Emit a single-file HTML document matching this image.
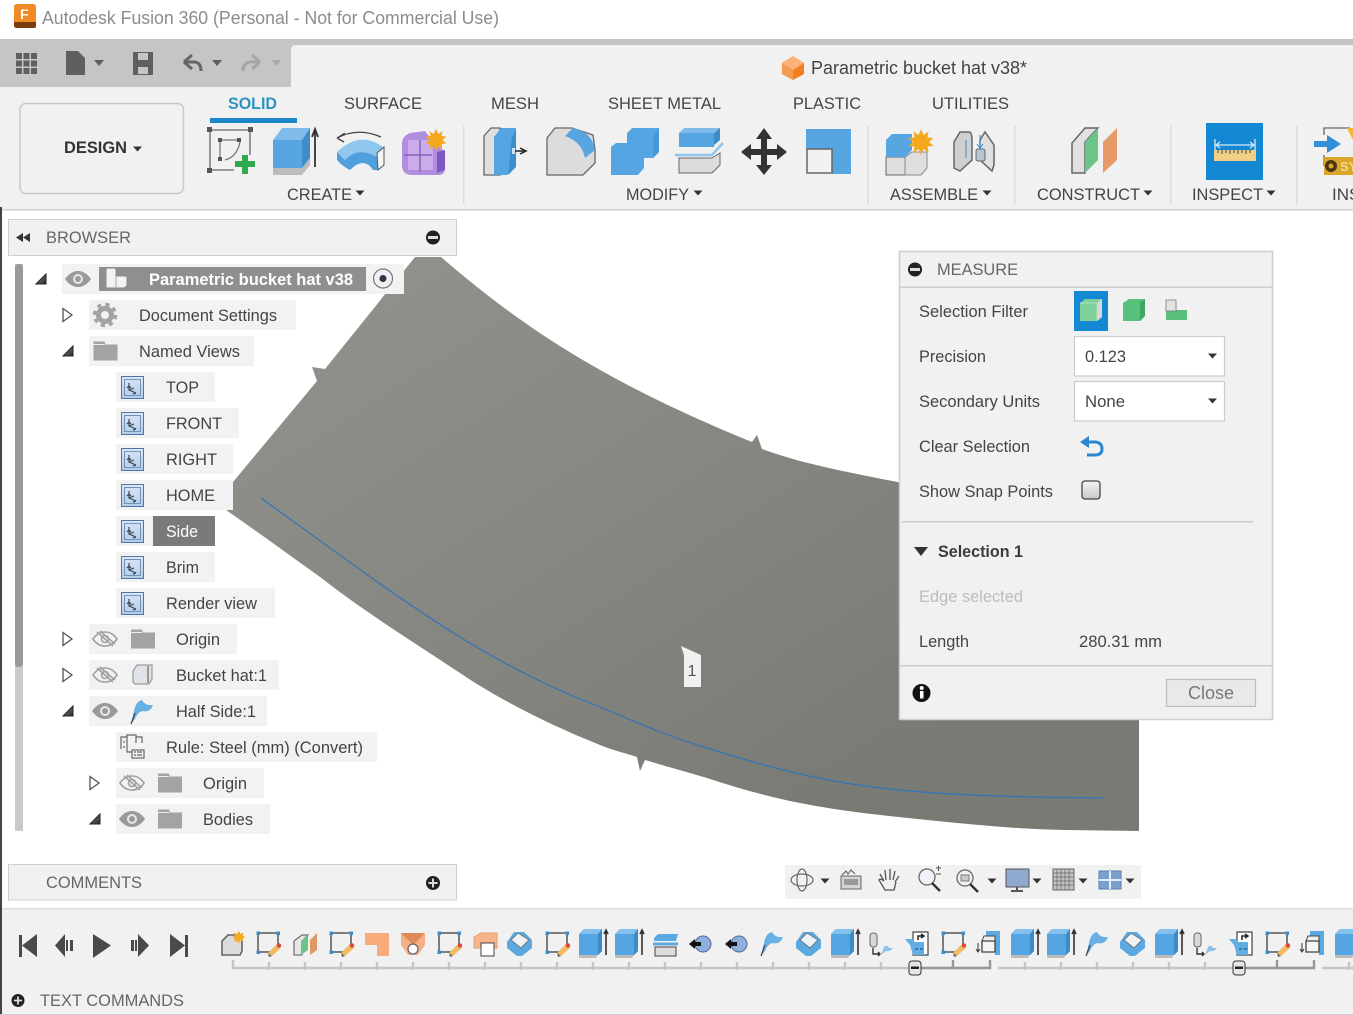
<!DOCTYPE html>
<html><head><meta charset="utf-8"><title>Autodesk Fusion 360</title>
<style>
html,body{margin:0;padding:0;background:#fff;width:1353px;height:1015px;overflow:hidden}
svg{display:block;position:absolute;left:0;top:0}
text{font-family:"Liberation Sans",Arial,sans-serif;font-size:17px;fill:#444}
.b{font-weight:bold}
</style></head><body>
<svg width="1353" height="1015" viewBox="0 0 1353 1015" xmlns="http://www.w3.org/2000/svg">
<defs>
<linearGradient id="hat" gradientUnits="userSpaceOnUse" x1="430" y1="257" x2="800" y2="830"><stop offset="0" stop-color="#90908b"/><stop offset=".5" stop-color="#868681"/><stop offset="1" stop-color="#7a7a75"/></linearGradient>
<linearGradient id="vw" x1="0" y1="0" x2="0" y2="1"><stop offset="0" stop-color="#dce7f4"/><stop offset="1" stop-color="#b4cbe6"/></linearGradient>
<linearGradient id="chk" x1="0" y1="0" x2="0" y2="1"><stop offset="0" stop-color="#f4f4f4"/><stop offset="1" stop-color="#c8c8c8"/></linearGradient>
<linearGradient id="tri" x1="0" y1="0" x2="1" y2="1"><stop offset="0" stop-color="#999"/><stop offset="1" stop-color="#222"/></linearGradient>
<g id="eye"><path d="M-13 0C-8-7-3-8 0-8S8-7 13 0C8 7 3 8 0 8S-8 7-13 0Z" fill="#9a9a9a"/><circle r="5" fill="#e8e8e8"/><circle r="3" fill="#9a9a9a"/></g>
<g id="noeye" fill="none" stroke="#a0a0a0" stroke-width="1.600"><path d="M-12 0C-8-6-3-7 0-7S8-6 12 0C8 6 3 7 0 7S-8 6-12 0Z"/><circle r="3.500"/><path d="M-8-7L8 7M-5-8L10 5"/></g>
<g id="folder"><path d="M0 0H11L12 3H24V19H0Z" fill="#a3a3a3"/><path d="M0 3H11" stroke="#eee" stroke-width="1"/></g>
<g id="view"><rect x=".5" y=".5" width="22" height="22" fill="url(#vw)" stroke="#4a78ad"/><rect x="3.500" y="3.500" width="16" height="16" fill="none" stroke="#6f93bd"/><path d="M8 7V14L15 17M8 10L6 12M8 10L10 12M15 17L12 18M8 14L13 12" fill="none" stroke="#35485f" stroke-width="1.200"/></g>
<path id="open" d="M-4-6.500L5 0L-4 6.500Z" fill="#fff" stroke="#555" stroke-width="1.300"/>
<path id="close" d="M5-5V5H-5Z" fill="url(#tri)" stroke="#222" stroke-width="1"/>
<path id="dn" d="M-4.500-2.500H4.500L0 2.500Z" fill="#333"/>
<g id="tsk"><path d="M-10-10H10V2M-10-10V9H3" fill="none" stroke="#555" stroke-width="1.500"/><path d="M-11.500-11.500h3.500v3.500h-3.500zM8.500-11.500h3.500v3.500h-3.500zM-11.500 7.500h3.500v3.500h-3.500z" fill="#3a8fc8"/><path d="M0 10L9 1L13 5L4 13Z" fill="#f0bb60"/><circle cx="11" cy="2.500" r="2.200" fill="#d9483b"/><path d="M0 10L4 13L1 14Z" fill="#666"/></g>
<g id="tex"><path d="M-14-9L-9-14H9V8L5 12H-14Z" fill="#55a5e2"/><path d="M-14-9L-9-14H9L5-9Z" fill="#84c0ec"/><path d="M5-9L9-14V8L5 12Z" fill="#3a8bc9"/><path d="M-14 12H5L3 15H-14Z" fill="#bdbdbd"/><path d="M13 12V-12M11-9L13-13L15-9" stroke="#333" fill="none" stroke-width="1.600"/></g>
<g id="tsh"><path d="M-13-1L-6-11H4L12-3V5L2 13H-3L-13 5Z" fill="#5ba9e0"/><path d="M-9-3L-2-10L9-3L1 5Z" fill="#eef2f5" stroke="#6a7a88"/></g>
<g id="tfl"><path d="M-11 13L-8 0Q-6-10 0-11Q3-5 11-6Q8 2 0 0Q-5 2-7 8Z" fill="#68b0e4"/><path d="M-11 13L-7 2" stroke="#445" stroke-width="1.200"/></g>
<g id="tjn"><circle cx="3" r="8" fill="#8fb0dc" stroke="#4c6c9c"/><path d="M-11 0L-5-5V-2H1V2H-5V5Z" fill="#111"/></g>
<g id="tml"><rect x="-11" y="-10" width="7" height="14" rx="3" fill="#d8d8d8" stroke="#666"/><path d="M-8 5V11H-1M-3 9L-1 11-3 13" fill="none" stroke="#333" stroke-width="1.400"/><path d="M0 12L3 4Q6 1 8 5L12 5Q9 9 5 8Z" fill="#8ec1ea"/></g>
<g id="tbx"><path d="M-4-11H11V12H-4Z" fill="#fff" stroke="#444" stroke-width="1.200"/><path d="M-12-4H-4V-1H7V12H-4L-7 2Z" fill="#62aee4"/><path d="M1-3V-7H6M4-9L7-7L4-5" stroke="#222" fill="none" stroke-width="1.500"/><path d="M-2 6H1M3 6H6" stroke="#1f6aa3" stroke-width="1.500"/></g>
<g id="trp"><path d="M-3-12H11V12H6V-7H-3Z" fill="#5ba9e0"/><path d="M-7-2L-5-7H6V-2Z" fill="#eee" stroke="#444"/><path d="M-7-2H6V9H-7Z" fill="#f5f5f5" stroke="#444" stroke-width="1.300"/><path d="M-11 0V8M-13 6L-11 9L-9 6" stroke="#333" fill="none"/></g>
</defs>

<!-- title -->
<rect width="1353" height="39" fill="#fff"/>
<path d="M14 7Q14 4 17 4H33Q36 4 36 7V28H17Q14 28 14 25Z" fill="#f08a24"/><path d="M14 22H36V25Q36 28 33 28H17Q14 28 14 25Z" fill="#7a3d12"/>
<text x="20" y="19" class="b" style="font-size:14px;fill:#fff">F</text>
<text x="42" y="24" style="fill:#8c8c8c;font-size:18px" textLength="457" lengthAdjust="spacingAndGlyphs">Autodesk Fusion 360 (Personal - Not for Commercial Use)</text>

<!-- toolbar -->
<rect y="39" width="1353" height="48" fill="#c5c5c5"/>
<path d="M291 87V50Q291 45 296 45H1353V87Z" fill="#f1f1f1"/>
<rect y="87" width="1353" height="122" fill="#f1f1f1"/>
<rect y="209" width="1353" height="1.500" fill="#cfcfcf"/>
<g fill="#5f5f5f"><path d="M16 53h6v6h-6zM23.500 53h6v6h-6zM31 53h6v6h-6zM16 60.500h6v6h-6zM23.500 60.500h6v6h-6zM31 60.500h6v6h-6zM16 68h6v6h-6zM23.500 68h6v6h-6zM31 68h6v6h-6z"/>
<path d="M66 51H78L85 58V75H66Z"/><path d="M94 60h10l-5 6z"/>
<path d="M133 52H153V75H133ZM138 53V60H148V53ZM138 67V74H148V67Z" fill-rule="evenodd"/>
<path d="M212 60h10l-5 6z"/></g>
<path d="M184 62L192 55M184 62L192 69M185 62H195Q201 63 201 71" fill="none" stroke="#666" stroke-width="3"/>
<path d="M260 62L252 55M260 62L252 69M259 62H250Q243 63 243 71" fill="none" stroke="#a5a5a5" stroke-width="3"/>
<path d="M272 60h9l-4.500 6z" fill="#aaa"/>

<path d="M782 63L793 56L804 63V74L793 80L782 74Z" fill="#f37e20"/><path d="M782 63L793 56L804 63L793 70Z" fill="#f9b27a"/><path d="M793 70V80L782 74V63Z" fill="#f59a52"/>
<text x="811" y="74" style="font-size:18px" textLength="216" lengthAdjust="spacingAndGlyphs">Parametric bucket hat v38*</text>

<text x="228" y="109" class="b" style="fill:#2f93c2" textLength="49" lengthAdjust="spacingAndGlyphs">SOLID</text>
<rect x="210" y="118" width="87" height="5" fill="#1d86c8"/>
<text x="344" y="109" textLength="78" lengthAdjust="spacingAndGlyphs">SURFACE</text>
<text x="491" y="109" textLength="48" lengthAdjust="spacingAndGlyphs">MESH</text>
<text x="608" y="109" textLength="113" lengthAdjust="spacingAndGlyphs">SHEET METAL</text>
<text x="793" y="109" textLength="68" lengthAdjust="spacingAndGlyphs">PLASTIC</text>
<text x="932" y="109" textLength="77" lengthAdjust="spacingAndGlyphs">UTILITIES</text>

<rect x="20" y="103.500" width="163.500" height="90" rx="6" fill="#f1f1f1" stroke="#c9c9c9" stroke-width="1.500"/>
<text x="64" y="153" class="b" style="fill:#333" textLength="63" lengthAdjust="spacingAndGlyphs">DESIGN</text>
<use href="#dn" x="137.500" y="149"/>

<!-- sketch -->
<path d="M210 130H250V155M210 130V170H234" fill="none" stroke="#666" stroke-width="1.300"/>
<path d="M207 127h5v5h-5zM248 127h5v5h-5zM207 168h5v5h-5zM218 138h4v4h-4zM237 138h4v4h-4zM218 157h4v4h-4z" fill="#555"/>
<path d="M220 142V157M222 140H237M225 160Q237 157 240 142" fill="none" stroke="#777" stroke-width="1.300"/>
<path d="M242 155h6v6h7v6h-7v7h-6v-7h-7v-6h7z" fill="#2fa84f"/>
<!-- extrude -->
<path d="M273 140H302V168H273Z" fill="#57a6e2"/><path d="M273 140L282 128H310L302 140Z" fill="#7fbcec"/><path d="M302 140L310 128V158L302 168Z" fill="#3e8dc9"/><path d="M273 168H302L310 158V165L302 175H273Z" fill="#bcbcbc"/>
<path d="M315 167V131M312 137L315 129L318 137" fill="none" stroke="#333" stroke-width="1.800"/>
<!-- revolve -->
<path d="M337 152Q360 130 383 147L377 157Q358 146 345 160Z" fill="#8fc7ef"/>
<path d="M337 152L345 160Q358 146 377 157L378 170H373Q364 156 350 170Q342 166 337 160Z" fill="#4f9fdc"/>
<path d="M337 138Q358 127 381 137M337 138L345 133M337 138L344 142" fill="none" stroke="#444" stroke-width="1.300"/>
<path d="M377 153L384 147V165L378 170Z" fill="#f4f4f4" stroke="#555"/>
<!-- form -->
<path d="M402 144Q402 136 410 133L425 131L432 140L445 152V168Q445 175 438 175H412Q402 175 402 165Z" fill="#b18de0"/>
<path d="M408 140H433V170H408Z" fill="#c9ace9"/><path d="M404 155H432M420 140V172" stroke="#7a55b8" stroke-width="1.200"/><path d="M437 152L445 150V170L437 173Z" fill="#7c59c4"/>
<path d="M436 129l2.500 5 4-3-1 5 5 .5-4 3.500 4 3.500-5 .5 1 5-4-3-2.500 5-2.500-5-4 3 1-5-5-.5 4-3.500-4-3.500 5-.5-1-5 4 3z" fill="#f4a81d"/>

<rect x="463" y="126" width="1.500" height="78" fill="#dcdcdc"/>
<rect x="867" y="126" width="1.500" height="78" fill="#dcdcdc"/>
<rect x="1014" y="126" width="1.500" height="78" fill="#dcdcdc"/>
<rect x="1170" y="126" width="1.500" height="78" fill="#dcdcdc"/>
<rect x="1296" y="126" width="1.500" height="78" fill="#dcdcdc"/>

<!-- press pull -->
<path d="M484 175V136L491 128H500V175Z" fill="#e0e0e0" stroke="#666" stroke-width="1.300"/>
<path d="M494 137L501 128H516L512 137ZM494 137H512V168L507 175H494Z" fill="#55a5e2"/><path d="M512 137L516 128V167L508 175Z" fill="#3e8dc9"/>
<path d="M513 151H524M520 148L526 151L520 154" stroke="#222" fill="none" stroke-width="1.500"/><rect x="512" y="148" width="3" height="6" fill="#cde3f5"/>
<!-- fillet -->
<path d="M547 175V138L555 128H572L593 135L595 150V163L583 175Z" fill="#dcdcdc" stroke="#666" stroke-width="1.300"/>
<path d="M565 136L573 128Q592 132 595 150L585 158Q582 142 565 136Z" fill="#57a6e2"/>
<!-- combine -->
<path d="M611 147L616 143H627V133L632 128H659V152L653 158H644V168L638 175H611Z" fill="#55a5e2"/>
<path d="M653 137L659 128V152L653 158Z" fill="#4a97d3"/>
<!-- split -->
<path d="M679 133L684 128H720L714 133Z" fill="#7fbcec"/><path d="M679 133H714V147H679Z" fill="#55a5e2"/><path d="M714 133L720 128V140L712 147H714Z" fill="#3e8dc9"/>
<path d="M675 155H712L723 143" stroke="#8ec5ee" stroke-width="2.500" fill="none"/>
<path d="M679 158H712L720 153V165L712 173H679Z" fill="#dcdcdc" stroke="#666"/>
<!-- move -->
<path d="M764 128L772 139H767V149H777V144L787 152L777 160V155H767V165H772L764 175L756 165H761V155H751V160L741 152L751 144V149H761V139H756Z" fill="#333"/>
<!-- align -->
<path d="M806 129H851V174H832V149H806Z" fill="#57a6e2"/><rect x="807" y="149" width="25" height="24" fill="#f1f1f1" stroke="#666" stroke-width="1.500"/>
<!-- new comp -->
<path d="M886 157H905V175H886Z" fill="#dedede" stroke="#666"/>
<path d="M905 157L912 152H927V168L921 175H905Z" fill="#dedede" stroke="#888"/>
<path d="M886 140L892 134H912V150L905 157H886Z" fill="#57a6e2"/>
<path d="M921 129l2.500 6 5-3.500-1 6 6 .5-4.500 4 4.500 4-6 .5 1 6-5-3.500-2.500 6-2.500-6-5 3.500 1-6-6-.5 4.500-4-4.500-4 6-.5-1-6 5 3.500z" fill="#f4a81d"/>
<!-- joint -->
<path d="M954 168V142L960 132H969Q972 132 972 140V160L960 171Z" fill="#cfcfcf" stroke="#666" stroke-width="1.500"/>
<path d="M994 145V165L992 171L980 160V140L985 132Z" fill="#e0e0e0" stroke="#666" stroke-width="1.500"/>
<rect x="976" y="149" width="9" height="12" rx="2" fill="#b8c4ce" stroke="#5d6a77"/><path d="M980 135V149M977 144L980 148L983 144M966 140V158" stroke="#3d8cc8" fill="none"/>
<!-- construct -->
<path d="M1072 173V143L1085 128H1098L1085 142V173Z" fill="#e0e0e0" stroke="#666" stroke-width="1.500"/>
<path d="M1085 142L1098 128V160L1085 173Z" fill="#6cc488"/>
<path d="M1103 142L1117 128V160L1103 173Z" fill="#e59a68"/>
<!-- inspect -->
<rect x="1206" y="123" width="57" height="57" fill="#1488d2"/>
<path d="M1214 150H1256V161H1214Z" fill="#f1cf84"/><path d="M1218 150v3M1222 150v4M1226 150v3M1230 150v4M1234 150v3M1238 150v4M1242 150v3M1246 150v4M1250 150v3" stroke="#444"/>
<path d="M1215 139V150M1255 139V150M1216 145H1254M1220 142L1216 145L1220 148M1250 142L1254 145L1250 148" stroke="#cfe8fb" fill="none" stroke-width="1.300"/>
<!-- insert -->
<path d="M1324 135V128H1350M1324 155V166" stroke="#666" fill="none" stroke-width="1.300"/><path d="M1347 128H1353V140Z" fill="#f4b62e"/>
<path d="M1314 141H1327V135L1341 144L1327 153V147H1314Z" fill="#2f8fd8"/>
<rect x="1324" y="157" width="29" height="18" fill="#d9a62e"/><circle cx="1331" cy="166" r="6" fill="#4a3412"/><circle cx="1331" cy="166" r="2.500" fill="#d9a62e"/>
<text x="1340" y="171" class="b" style="font-size:13px;fill:#f1d98b">SY</text>

<text x="287" y="200" textLength="65" lengthAdjust="spacingAndGlyphs">CREATE</text><use href="#dn" x="360" y="193"/>
<text x="626" y="200" textLength="63" lengthAdjust="spacingAndGlyphs">MODIFY</text><use href="#dn" x="698" y="193"/>
<text x="890" y="200" textLength="88" lengthAdjust="spacingAndGlyphs">ASSEMBLE</text><use href="#dn" x="987" y="193"/>
<text x="1037" y="200" textLength="103" lengthAdjust="spacingAndGlyphs">CONSTRUCT</text><use href="#dn" x="1148" y="193"/>
<text x="1192" y="200" textLength="71" lengthAdjust="spacingAndGlyphs">INSPECT</text><use href="#dn" x="1271" y="193"/>
<text x="1332" y="200">INSERT</text>

<!-- viewport model -->
<path fill="url(#hat)" d="M415 257H441C520 325 600 380 752 442L757 435L762 449C810 466 850 475 1139 525V831L1064 830C1020 829 990 826 957 823C900 817 850 813 800 803C770 797 740 789 707 778C690 773 665 766 645 760L640 771L637 757C625 753 612 750 600 745C550 725 500 700 460 673C410 640 365 612 320 577C285 552 255 530 226 510L233 482L317 381L312 367L325 369Z"/>
<path d="M261 498C340 555 400 600 460 637C505 665 555 690 600 707C635 722 670 737 707 748C745 760 780 770 814 777C850 785 885 789 921 792C960 795 995 796 1029 797L1103 798" fill="none" stroke="#2f74b8" stroke-width="1.200"/>
<path d="M681 646L701 655V687H684V655Z" fill="#f1f1f1"/><text x="687.500" y="676" style="font-size:16px;fill:#555">1</text>

<!-- left edge -->
<rect x="0" y="207" width="2" height="808" fill="#444"/>

<!-- browser -->
<rect x="8.500" y="219.500" width="448" height="36" fill="#f1f1f1" stroke="#cfcfcf"/>
<path d="M23 233V242L16 237.500ZM30 233V242L23 237.500Z" fill="#333"/>
<text x="46" y="243" style="fill:#666" textLength="85" lengthAdjust="spacingAndGlyphs">BROWSER</text>
<circle cx="433" cy="237.500" r="7" fill="#222"/><rect x="428" y="236" width="10" height="3" fill="#ddd"/>

<rect x="15" y="264" width="8" height="567" fill="#cacaca"/><rect x="15" y="264" width="8" height="403" rx="3" fill="#9a9a9a"/>

<g fill="#f2f2f2">
<rect x="62" y="264" width="342" height="30"/>
<rect x="89" y="300" width="207" height="30"/><rect x="89" y="336" width="165" height="30"/>
<rect x="116" y="372" width="99" height="30"/><rect x="116" y="408" width="123" height="30"/><rect x="116" y="444" width="117" height="30"/><rect x="116" y="480" width="117" height="30"/><rect x="116" y="516" width="99" height="30"/><rect x="116" y="552" width="99" height="30"/><rect x="116" y="588" width="159" height="30"/>
<rect x="89" y="624" width="148" height="30"/><rect x="89" y="660" width="190" height="30"/><rect x="89" y="696" width="178" height="30"/>
<rect x="116" y="732" width="261" height="30"/><rect x="116" y="768" width="148" height="30"/><rect x="116" y="804" width="154" height="30"/>
</g>
<rect x="99" y="267" width="267" height="24" fill="#8f8f8f"/>
<rect x="153" y="516" width="62" height="30" fill="#7a7a7a"/>

<use href="#close" x="41" y="279"/>
<use href="#eye" x="78" y="279"/>
<path d="M106 288V270Q106 268 108 268H114Q116 268 116 270V276H125Q127 276 127 278V286L124 288Z" fill="#f2f2f2" stroke="#888"/><path d="M116 276V288" stroke="#aaa"/>
<text x="149" y="285" class="b" style="fill:#fff" textLength="204" lengthAdjust="spacingAndGlyphs">Parametric bucket hat v38</text>
<circle cx="383" cy="278.500" r="9.500" fill="#eef0f4" stroke="#777" stroke-width="1.200"/><circle cx="383" cy="278.500" r="3.500" fill="#334"/>

<use href="#open" x="67" y="315"/>
<g transform="translate(105 315)"><circle r="6.500" fill="none" stroke="#a3a3a3" stroke-width="5"/><circle r="10.500" fill="none" stroke="#a3a3a3" stroke-width="3.500" stroke-dasharray="4.100 4.150"/></g>
<text x="139" y="321" textLength="138" lengthAdjust="spacingAndGlyphs">Document Settings</text>
<use href="#close" x="68" y="351"/>
<use href="#folder" x="93.500" y="341.500"/>
<text x="139" y="357" textLength="101" lengthAdjust="spacingAndGlyphs">Named Views</text>

<use href="#view" x="121" y="376"/><text x="166" y="393" textLength="33" lengthAdjust="spacingAndGlyphs">TOP</text>
<use href="#view" x="121" y="412"/><text x="166" y="429" textLength="56" lengthAdjust="spacingAndGlyphs">FRONT</text>
<use href="#view" x="121" y="448"/><text x="166" y="465" textLength="51" lengthAdjust="spacingAndGlyphs">RIGHT</text>
<use href="#view" x="121" y="484"/><text x="166" y="501" textLength="49" lengthAdjust="spacingAndGlyphs">HOME</text>
<use href="#view" x="121" y="520"/><text x="166" y="537" style="fill:#fff" textLength="32" lengthAdjust="spacingAndGlyphs">Side</text>
<use href="#view" x="121" y="556"/><text x="166" y="573" textLength="33" lengthAdjust="spacingAndGlyphs">Brim</text>
<use href="#view" x="121" y="592"/><text x="166" y="609" textLength="91" lengthAdjust="spacingAndGlyphs">Render view</text>

<use href="#open" x="67" y="639"/><use href="#noeye" x="105" y="639"/><use href="#folder" x="131" y="629.500"/>
<text x="176" y="645" textLength="44" lengthAdjust="spacingAndGlyphs">Origin</text>
<use href="#open" x="67" y="675"/><use href="#noeye" x="105" y="675"/>
<path d="M133 682V671L137 665H152V679L149 684H135Z" fill="#dfe2e6" stroke="#888"/><path d="M148 666V683" stroke="#999" stroke-width="2"/>
<text x="176" y="681" textLength="91" lengthAdjust="spacingAndGlyphs">Bucket hat:1</text>
<use href="#close" x="68" y="711"/><use href="#eye" x="105" y="711"/><use href="#tfl" x="142" y="711"/>
<text x="176" y="717" textLength="80" lengthAdjust="spacingAndGlyphs">Half Side:1</text>
<g fill="none" stroke="#666" stroke-width="1.200"><path d="M121 749V737H127V735H136V737H142V743M127 737V752H133M136 737V743M124 741v2M124 746v2"/><rect x="132" y="750" width="12" height="8" fill="#f4f4f4"/><path d="M134 752h2M137 752h5M134 755h2M137 755h5"/></g>
<text x="166" y="753" textLength="197" lengthAdjust="spacingAndGlyphs">Rule: Steel (mm) (Convert)</text>
<use href="#open" x="94" y="783"/><use href="#noeye" x="132" y="783"/><use href="#folder" x="158" y="773.500"/>
<text x="203" y="789" textLength="44" lengthAdjust="spacingAndGlyphs">Origin</text>
<use href="#close" x="95" y="819"/><use href="#eye" x="132" y="819"/><use href="#folder" x="158" y="809.500"/>
<text x="203" y="825" textLength="50" lengthAdjust="spacingAndGlyphs">Bodies</text>

<!-- comments -->
<rect x="8.500" y="864.500" width="448" height="35.500" fill="#f1f1f1" stroke="#cfcfcf"/>
<text x="46" y="888" style="fill:#666" textLength="96" lengthAdjust="spacingAndGlyphs">COMMENTS</text>
<circle cx="433" cy="883" r="7" fill="#222"/><path d="M428.500 883h9M433 878.500v9" stroke="#ddd" stroke-width="2"/>

<!-- nav bar -->
<rect x="785" y="865" width="356" height="34" fill="#f1f1f1"/>
<g fill="none" stroke="#666" stroke-width="1.200"><ellipse cx="802" cy="880" rx="11" ry="6"/><ellipse cx="802" cy="880" rx="5" ry="11"/></g>
<use href="#dn" x="825" y="881"/>
<rect x="841" y="876" width="20" height="13" fill="#d4d4d4" stroke="#666"/><rect x="844" y="879" width="14" height="6" fill="#999"/><path d="M842 875L846 871L848 874L851 870L855 874" fill="none" stroke="#555"/>
<path d="M884 881L880 874M886 880L885 870M890 880V869M893 880L895 871M895 882L899 876M884 881Q880 878 879 880L885 890H894L896 882" fill="none" stroke="#555" stroke-width="1.300"/>
<circle cx="927" cy="877" r="8" fill="#eef2f6" stroke="#666" stroke-width="1.300"/><path d="M932 883L940 891" stroke="#333" stroke-width="2.500"/><path d="M936 868h5M938.500 866v5M936 874h5" stroke="#555"/>
<circle cx="965" cy="878" r="8" fill="#eef2f6" stroke="#666" stroke-width="1.300"/><rect x="961" y="875" width="8" height="6" fill="#ccc" stroke="#777"/><path d="M970 884L978 892" stroke="#333" stroke-width="2.500"/>
<use href="#dn" x="992" y="881"/>
<rect x="1006" y="869" width="23" height="18" fill="#8fa9cf" stroke="#555"/><path d="M1017 887v3M1011 891h12" stroke="#555" stroke-width="2"/>
<use href="#dn" x="1037" y="881"/>
<rect x="1053" y="869" width="21" height="21" fill="#c4c4c4" stroke="#666"/><path d="M1053 873h21M1053 877h21M1053 881h21M1053 885h21M1057 869v21M1061 869v21M1065 869v21M1069 869v21" stroke="#666" stroke-width=".7"/>
<use href="#dn" x="1083" y="881"/>
<rect x="1099" y="871" width="22" height="18" fill="#7ba0d0" stroke="#5a7fb0"/><path d="M1110 871v18M1099 880h22" stroke="#e6eef8" stroke-width="2"/>
<use href="#dn" x="1130" y="881"/>

<!-- measure -->
<rect x="899.500" y="251.500" width="373" height="468" fill="#f1f1f1" stroke="#cdcdcd" stroke-width="1.500"/>
<rect x="900" y="286.500" width="372" height="1.500" fill="#cdcdcd"/>
<circle cx="915" cy="269.500" r="7" fill="#222"/><rect x="910" y="268" width="10" height="3" fill="#ddd"/>
<text x="937" y="275" style="fill:#666" textLength="81" lengthAdjust="spacingAndGlyphs">MEASURE</text>
<text x="919" y="317" textLength="109" lengthAdjust="spacingAndGlyphs">Selection Filter</text>
<text x="919" y="362" textLength="67" lengthAdjust="spacingAndGlyphs">Precision</text>
<text x="919" y="407" textLength="121" lengthAdjust="spacingAndGlyphs">Secondary Units</text>
<text x="919" y="452" textLength="111" lengthAdjust="spacingAndGlyphs">Clear Selection</text>
<text x="919" y="497" textLength="134" lengthAdjust="spacingAndGlyphs">Show Snap Points</text>
<rect x="1074" y="291" width="34" height="40" fill="#1488d2"/>
<path d="M1080 303L1085 299H1102L1101 318L1097 321H1080Z" fill="#7fd09b"/><path d="M1097 303L1102 299V317L1097 321Z" fill="#d8d8d8"/><path d="M1080 303H1097V321" fill="none" stroke="#a9dfbb"/>
<path d="M1123 303L1129 299H1145V316L1140 321H1123Z" fill="#58c07c"/><path d="M1140 303L1145 299V316L1140 321Z" fill="#41a563"/>
<path d="M1166 300H1176V310H1187V320H1166Z" fill="#58c07c"/><path d="M1166 300H1176V311H1166Z" fill="#e4e4e4" stroke="#777" stroke-width=".8"/>
<rect x="1074.500" y="336.500" width="150" height="39.500" fill="#fff" stroke="#ccc" stroke-width="1.200"/>
<text x="1085" y="362" textLength="41" lengthAdjust="spacingAndGlyphs">0.123</text><use href="#dn" x="1212.500" y="356"/>
<rect x="1074.500" y="381.500" width="150" height="39.500" fill="#fff" stroke="#ccc" stroke-width="1.200"/>
<text x="1085" y="407" textLength="40" lengthAdjust="spacingAndGlyphs">None</text><use href="#dn" x="1212.500" y="401"/>
<path d="M1087 442H1096Q1102 443 1102 449Q1102 455 1095 455H1087" fill="none" stroke="#2c87d0" stroke-width="3"/><path d="M1080 442L1089 436V448Z" fill="#2c87d0"/>
<rect x="1082" y="481" width="18" height="18" rx="3" fill="url(#chk)" stroke="#444" stroke-width="1.300"/>
<rect x="902" y="521" width="351" height="1.500" fill="#cbcbcb"/>
<path d="M914 547H928L921 556Z" fill="#333"/>
<text x="938" y="557" class="b" style="fill:#3c3c3c" textLength="85" lengthAdjust="spacingAndGlyphs">Selection 1</text>
<text x="919" y="602" style="fill:#bcbcbc" textLength="104" lengthAdjust="spacingAndGlyphs">Edge selected</text>
<text x="919" y="647" textLength="50" lengthAdjust="spacingAndGlyphs">Length</text>
<text x="1079" y="647" textLength="83" lengthAdjust="spacingAndGlyphs">280.31 mm</text>
<rect x="900" y="665" width="372" height="1.500" fill="#cdcdcd"/>
<circle cx="921.500" cy="693" r="9" fill="#111"/><rect x="920" y="691" width="3.500" height="7.500" fill="#fff"/><circle cx="921.700" cy="688" r="2" fill="#fff"/>
<rect x="1166.500" y="679.500" width="89" height="27" fill="#e9e9e9" stroke="#bdbdbd" stroke-width="1.200"/>
<text x="1188" y="699" style="fill:#777;font-size:18px" textLength="46" lengthAdjust="spacingAndGlyphs">Close</text>

<!-- bottom -->
<rect y="908" width="1353" height="107" fill="#f1f1f1"/>
<rect y="908" width="1353" height="1.500" fill="#dcdcdc"/>
<rect x="0" y="908" width="2" height="107" fill="#444"/>
<g fill="#4a4a4a">
<path d="M19 935h3v22h-3zM37 934V957L22 945.500Z"/>
<path d="M65 934V957L55 945.500ZM66 940h2v11h-2zM70 940h3v11h-3z"/>
<path d="M93 934L111 945.500L93 958Z"/>
<path d="M131 940h3v11h-3zM135 940h2v11h-2zM138 934L149 945.500L138 957Z"/>
<path d="M170 934L185 945.500L170 957ZM185 935h3v22h-3z"/>
</g>
<path d="M233 968H915M233 960v9M269 962v8M305 962v8M341 962v8M377 962v8M413 962v8M449 962v8M485 962v8M521 962v8M557 962v8M593 962v8M629 962v8M665 962v8M701 962v8M737 962v8M773 962v8M809 962v8M845 962v8M881 962v8M998 968H1240M1025 962v8M1061 962v8M1097 962v8M1133 962v8M1169 962v8M1205 962v8M1322 968H1353M1349 962v8" stroke="#c4c4c4" stroke-width="2.400" fill="none"/>
<path d="M915 968H990V960M953 960v8M1240 968H1314V960M1277 960v8" stroke="#979797" stroke-width="2.400" fill="none"/>
<g><rect x="909" y="961" width="12" height="14" rx="3" fill="#e6e6e6" stroke="#333"/><rect x="911" y="966.500" width="8" height="2.500" fill="#222"/><rect x="1233" y="961" width="12" height="14" rx="3" fill="#e6e6e6" stroke="#333"/><rect x="1235" y="966.500" width="8" height="2.500" fill="#222"/></g>

<!-- timeline icons -->
<path d="M222 955V941L228 935H240L242 938V951L240 955Z" fill="#dcdcdc" stroke="#666" stroke-width="1.600"/><path d="M239 931l1.500 3 3-1.500-1 3.500 3 1-3 1.500 1 3-3.500-1-1.500 3-1.500-3-3 1 1-3-3-1.500 3-1-1-3.500 3 1.500z" fill="#f4a81d"/>
<use href="#tsk" x="268" y="943"/>
<path d="M294 955V941L302 935H308L302 941V955Z" fill="#e6e6e6" stroke="#555"/><path d="M301 941L308 935V950L301 955Z" fill="#6cc488"/><path d="M310 940L317 933V950L310 955Z" fill="#dd9a66"/>
<use href="#tsk" x="341" y="943"/>
<path d="M365 933H389V956H377V945H365Z" fill="#f8ac7c"/>
<path d="M401 933H425V945L418 955H408L401 945Z" fill="#f5b08a"/><path d="M401 933L413 945L425 933Z" fill="#e08a58"/><circle cx="413" cy="949" r="5" fill="#fff" stroke="#666" stroke-width="1.300"/>
<use href="#tsk" x="449" y="943"/>
<path d="M474 937L481 933H497V948H474Z" fill="#f5b48a" stroke="#e59f70"/><rect x="481" y="943" width="13" height="13" fill="#fff" stroke="#444"/>
<use href="#tsh" x="520" y="943"/>
<use href="#tsk" x="557" y="943"/>
<use href="#tex" x="593" y="943"/>
<use href="#tex" x="629" y="943"/>
<path d="M654 938L658 934H678L676 941H654Z" fill="#5ba9e0"/><path d="M653 944H678" stroke="#5ba9e0" stroke-width="3"/><path d="M655 947H676V956H655Z" fill="#dcdcdc" stroke="#444"/>
<use href="#tjn" x="700" y="944"/>
<use href="#tjn" x="736" y="944"/>
<use href="#tfl" x="772" y="943"/>
<use href="#tsh" x="809" y="943"/>
<use href="#tex" x="845" y="943"/>
<use href="#tml" x="881" y="943"/>
<use href="#tbx" x="917" y="943"/>
<use href="#tsk" x="953" y="943"/>
<use href="#trp" x="989" y="943"/>
<use href="#tex" x="1025" y="943"/>
<use href="#tex" x="1061" y="943"/>
<use href="#tfl" x="1097" y="943"/>
<use href="#tsh" x="1133" y="943"/>
<use href="#tex" x="1169" y="943"/>
<use href="#tml" x="1205" y="943"/>
<use href="#tbx" x="1241" y="943"/>
<use href="#tsk" x="1277" y="943"/>
<use href="#trp" x="1313" y="943"/>
<use href="#tex" x="1349" y="943"/>

<circle cx="18" cy="1000.500" r="6.500" fill="#222"/><path d="M14 1000.500h8M18 996.500v8" stroke="#ddd" stroke-width="1.800"/>
<text x="40" y="1006" style="fill:#666" textLength="144" lengthAdjust="spacingAndGlyphs">TEXT COMMANDS</text>
<rect y="1014" width="1353" height="1" fill="#cfcfcf"/>
</svg>
</body></html>
